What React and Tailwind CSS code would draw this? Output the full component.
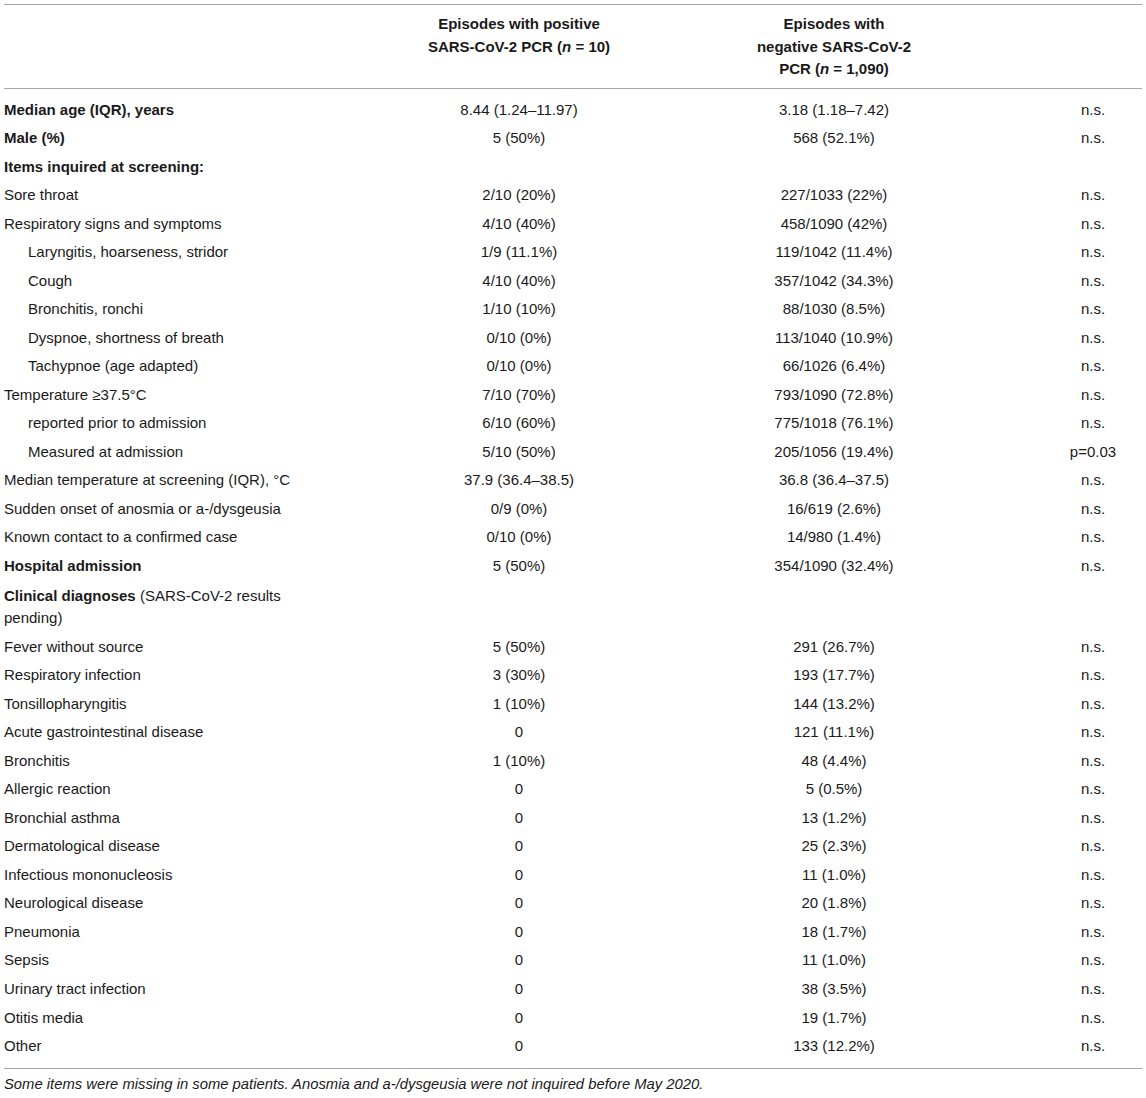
const rows = [
  { label: "Median age (IQR), years", bold: true, a: "8.44 (1.24–11.97)", b: "3.18 (1.18–7.42)", p: "n.s." },
  { label: "Male (%)", bold: true, a: "5 (50%)", b: "568 (52.1%)", p: "n.s." },
  { label: "Items inquired at screening:", bold: true, a: "", b: "", p: "" },
  { label: "Sore throat", a: "2/10 (20%)", b: "227/1033 (22%)", p: "n.s." },
  { label: "Respiratory signs and symptoms", a: "4/10 (40%)", b: "458/1090 (42%)", p: "n.s." },
  { label: "Laryngitis, hoarseness, stridor", indent: true, a: "1/9 (11.1%)", b: "119/1042 (11.4%)", p: "n.s." },
  { label: "Cough", indent: true, a: "4/10 (40%)", b: "357/1042 (34.3%)", p: "n.s." },
  { label: "Bronchitis, ronchi", indent: true, a: "1/10 (10%)", b: "88/1030 (8.5%)", p: "n.s." },
  { label: "Dyspnoe, shortness of breath", indent: true, a: "0/10 (0%)", b: "113/1040 (10.9%)", p: "n.s." },
  { label: "Tachypnoe (age adapted)", indent: true, a: "0/10 (0%)", b: "66/1026 (6.4%)", p: "n.s." },
  { label: "Temperature ≥37.5°C", a: "7/10 (70%)", b: "793/1090 (72.8%)", p: "n.s." },
  { label: "reported prior to admission", indent: true, a: "6/10 (60%)", b: "775/1018 (76.1%)", p: "n.s." },
  { label: "Measured at admission", indent: true, a: "5/10 (50%)", b: "205/1056 (19.4%)", p: "p=0.03" },
  { label: "Median temperature at screening (IQR), °C", a: "37.9 (36.4–38.5)", b: "36.8 (36.4–37.5)", p: "n.s." },
  { label: "Sudden onset of anosmia or a-/dysgeusia", a: "0/9 (0%)", b: "16/619 (2.6%)", p: "n.s." },
  { label: "Known contact to a confirmed case", a: "0/10 (0%)", b: "14/980 (1.4%)", p: "n.s." },
  { label: "Hospital admission", bold: true, a: "5 (50%)", b: "354/1090 (32.4%)", p: "n.s." },
  { clinical: true, a: "", b: "", p: "" },
  { label: "Fever without source", a: "5 (50%)", b: "291 (26.7%)", p: "n.s." },
  { label: "Respiratory infection", a: "3 (30%)", b: "193 (17.7%)", p: "n.s." },
  { label: "Tonsillopharyngitis", a: "1 (10%)", b: "144 (13.2%)", p: "n.s." },
  { label: "Acute gastrointestinal disease", a: "0", b: "121 (11.1%)", p: "n.s." },
  { label: "Bronchitis", a: "1 (10%)", b: "48 (4.4%)", p: "n.s." },
  { label: "Allergic reaction", a: "0", b: "5 (0.5%)", p: "n.s." },
  { label: "Bronchial asthma", a: "0", b: "13 (1.2%)", p: "n.s." },
  { label: "Dermatological disease", a: "0", b: "25 (2.3%)", p: "n.s." },
  { label: "Infectious mononucleosis", a: "0", b: "11 (1.0%)", p: "n.s." },
  { label: "Neurological disease", a: "0", b: "20 (1.8%)", p: "n.s." },
  { label: "Pneumonia", a: "0", b: "18 (1.7%)", p: "n.s." },
  { label: "Sepsis", a: "0", b: "11 (1.0%)", p: "n.s." },
  { label: "Urinary tract infection", a: "0", b: "38 (3.5%)", p: "n.s." },
  { label: "Otitis media", a: "0", b: "19 (1.7%)", p: "n.s." },
  { label: "Other", a: "0", b: "133 (12.2%)", p: "n.s." },
];

export default function App() {
  const last = rows.length - 1;
  return (
    <div
      className="bg-white px-[4px] pt-[4px] text-[15px] leading-[22.5px] text-[#1a1a1a]"
      style={{ fontFamily: '"Liberation Sans", Arial, sans-serif' }}
    >
      <table className="w-full table-fixed border-collapse border-t border-[#a8a8a8]">
        <colgroup>
          <col className="w-[410px]" />
          <col className="w-[210px]" />
          <col className="w-[420px]" />
          <col />
        </colgroup>
        <thead>
          <tr className="border-b border-[#a8a8a8]">
            <th className="pt-[8px] pb-[7px]" />
            <th className="pt-[8px] pb-[7px] text-center align-top font-bold whitespace-nowrap">
              Episodes with positive
              <br />
              SARS-CoV-2 PCR (<i>n</i> = 10)
            </th>
            <th className="pt-[8px] pb-[7px] text-center align-top font-bold whitespace-nowrap">
              Episodes with
              <br />
              negative SARS-CoV-2
              <br />
              PCR (<i>n</i> = 1,090)
            </th>
            <th className="pt-[8px] pb-[7px]" />
          </tr>
        </thead>
        <tbody>
          {rows.map((r, i) => {
            const pad =
              i === 0
                ? "pt-[10px] pb-[3px]"
                : i === last
                ? "pt-[3px] pb-[10px]"
                : r.clinical
                ? "pt-[4px] pb-[3px]"
                : "py-[3px]";
            return (
              <tr key={i} className={`leading-[22.53px] ${i === last ? "border-b border-[#a8a8a8]" : ""}`}>
                <td className={`${pad} align-top ${r.indent ? "pl-[24px]" : ""} ${r.bold ? "font-bold" : ""}`}>
                  {r.clinical ? (
                    <>
                      <b>Clinical diagnoses</b> (SARS-CoV-2 results
                      <br />
                      pending)
                    </>
                  ) : (
                    r.label
                  )}
                </td>
                <td className={`${pad} align-top text-center`}>{r.a}</td>
                <td className={`${pad} align-top text-center`}>{r.b}</td>
                <td className={`${pad} align-top text-center`}>{r.p}</td>
              </tr>
            );
          })}
        </tbody>
      </table>
      <p className="pt-[5px] text-[14.8px] leading-[20px] italic">
        Some items were missing in some patients. Anosmia and a-/dysgeusia were not inquired before May 2020.
      </p>
    </div>
  );
}
